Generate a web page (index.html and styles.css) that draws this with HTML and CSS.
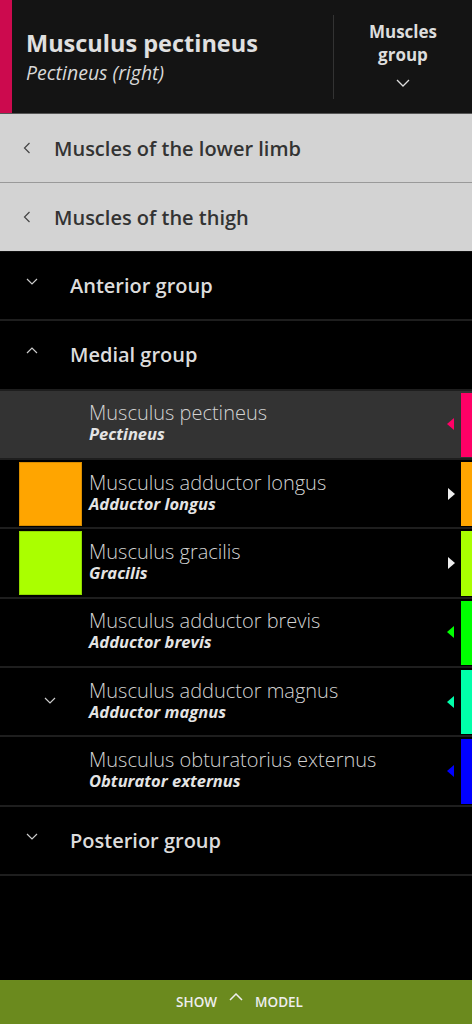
FILE: index.html
```html
<!DOCTYPE html>
<html lang="en">
<head>
<meta charset="utf-8">
<title>Musculus pectineus</title>
<link rel="stylesheet" href="styles.css">
</head>
<body>
<div class="app">
  <header class="header">
    <div class="accent"></div>
    <div class="title-block">
      <div class="title">Musculus pectineus</div>
      <div class="subtitle">Pectineus (right)</div>
    </div>
    <div class="group-btn">
      <div class="group-label">Muscles<br>group</div>
      <svg class="group-chev" width="14" height="8" viewBox="0 0 14 8"><path d="M1 1 L7 7 L13 1" fill="none" stroke="#ddd" stroke-width="1.3"/></svg>
    </div>
  </header>

  <div class="nav-row">
    <svg class="nav-chev" width="8" height="12" viewBox="0 0 8 12"><path d="M6.5 1 L1.5 6 L6.5 11" fill="none" stroke="#444" stroke-width="1.2"/></svg>
    <span class="nav-text">Muscles of the lower limb</span>
  </div>
  <div class="nav-row last">
    <svg class="nav-chev" width="8" height="12" viewBox="0 0 8 12"><path d="M6.5 1 L1.5 6 L6.5 11" fill="none" stroke="#444" stroke-width="1.2"/></svg>
    <span class="nav-text">Muscles of the thigh</span>
  </div>

  <div class="group-row">
    <svg class="grp-chev" width="12" height="7" viewBox="0 0 12 7"><path d="M1 1 L6 6 L11 1" fill="none" stroke="#ccc" stroke-width="1.2"/></svg>
    <span class="group-text">Anterior group</span>
  </div>
  <div class="group-row">
    <svg class="grp-chev" width="12" height="7" viewBox="0 0 12 7"><path d="M1 6 L6 1 L11 6" fill="none" stroke="#ccc" stroke-width="1.2"/></svg>
    <span class="group-text">Medial group</span>
  </div>

  <div class="item selected">
    <div class="lead"></div>
    <div class="item-text">
      <div class="item-name">Musculus pectineus</div>
      <div class="item-sub">Pectineus</div>
    </div>
    <svg class="tri" width="8" height="12" viewBox="0 0 8 12"><path d="M7 0 L0 6 L7 12 Z" fill="#ff0066"/></svg>
    <div class="bar" style="background:#ff0066"></div>
  </div>
  <div class="item">
    <div class="lead"><div class="swatch" style="background:#ffa500;border-color:#d98c00"></div></div>
    <div class="item-text">
      <div class="item-name">Musculus adductor longus</div>
      <div class="item-sub">Adductor longus</div>
    </div>
    <svg class="tri" width="8" height="12" viewBox="0 0 8 12"><path d="M1 0 L8 6 L1 12 Z" fill="#eee"/></svg>
    <div class="bar" style="background:#ffa500"></div>
  </div>
  <div class="item">
    <div class="lead"><div class="swatch" style="background:#aaff00;border-color:#90d800"></div></div>
    <div class="item-text">
      <div class="item-name">Musculus gracilis</div>
      <div class="item-sub">Gracilis</div>
    </div>
    <svg class="tri" width="8" height="12" viewBox="0 0 8 12"><path d="M1 0 L8 6 L1 12 Z" fill="#eee"/></svg>
    <div class="bar" style="background:#aaff00"></div>
  </div>
  <div class="item">
    <div class="lead"></div>
    <div class="item-text">
      <div class="item-name">Musculus adductor brevis</div>
      <div class="item-sub">Adductor brevis</div>
    </div>
    <svg class="tri" width="8" height="12" viewBox="0 0 8 12"><path d="M7 0 L0 6 L7 12 Z" fill="#00ff00"/></svg>
    <div class="bar" style="background:#00ff00"></div>
  </div>
  <div class="item">
    <div class="lead"><svg class="item-chev" width="12" height="7" viewBox="0 0 12 7"><path d="M1 1 L6 6 L11 1" fill="none" stroke="#ccc" stroke-width="1.2"/></svg></div>
    <div class="item-text">
      <div class="item-name">Musculus adductor magnus</div>
      <div class="item-sub">Adductor magnus</div>
    </div>
    <svg class="tri" width="8" height="12" viewBox="0 0 8 12"><path d="M7 0 L0 6 L7 12 Z" fill="#00ffaa"/></svg>
    <div class="bar" style="background:#00ffaa"></div>
  </div>
  <div class="item">
    <div class="lead"></div>
    <div class="item-text">
      <div class="item-name">Musculus obturatorius externus</div>
      <div class="item-sub">Obturator externus</div>
    </div>
    <svg class="tri" width="8" height="12" viewBox="0 0 8 12"><path d="M7 0 L0 6 L7 12 Z" fill="#0000ff"/></svg>
    <div class="bar" style="background:#0000ff"></div>
  </div>

  <div class="group-row">
    <svg class="grp-chev" width="12" height="7" viewBox="0 0 12 7"><path d="M1 1 L6 6 L11 1" fill="none" stroke="#ccc" stroke-width="1.2"/></svg>
    <span class="group-text">Posterior group</span>
  </div>

  <div class="spacer"></div>

  <footer class="footer">
    <span>SHOW</span>
    <svg class="foot-chev" width="14" height="8" viewBox="0 0 14 8"><path d="M1 7 L7 1 L13 7" fill="none" stroke="#eee" stroke-width="1.5"/></svg>
    <span>MODEL</span>
  </footer>
</div>
</body>
</html>
```

FILE: styles.css
```css
* { box-sizing: border-box; }
html, body { margin: 0; padding: 0; background: #000; }
body { font-family: "Open Sans", "Noto Sans", sans-serif; }
.app { width: 472px; height: 1024px; display: flex; flex-direction: column; background: #000; overflow: hidden; }

.header { height: 114px; flex: none; display: flex; background: #141414; border-bottom: 1px solid #555; }
.accent { width: 12px; background: #cc0a4e; flex: none; }
.title-block { flex: 1; padding: 28px 0 0 14px; }
.title { font-size: 23.5px; font-weight: 700; color: #e0e0e0; line-height: 31px; }
.subtitle { font-size: 19.5px; font-style: italic; color: #d8d8d8; line-height: 27px; }
.group-btn { width: 139px; flex: none; margin: 15px 0 14px; border-left: 1px solid #333; display: flex; flex-direction: column; align-items: center; padding-top: 5px; }
.group-label { font-size: 17px; font-weight: 700; color: #ddd; text-align: center; line-height: 23px; }
.group-chev { margin-top: 13px; }

.nav-row { height: 69px; flex: none; display: flex; align-items: center; background: #d3d3d3; border-bottom: 1px solid #999; }
.nav-row.last { border-bottom-color: #111; }
.nav-chev { margin-left: 23px; margin-right: 23px; }
.nav-text { font-size: 20px; font-weight: 600; color: #333; }

.group-row { height: 69.3px; flex: none; display: flex; align-items: center; border-bottom: 2px solid #1e1e1e; }
.grp-chev { margin-left: 26px; margin-right: 32px; position: relative; top: -4px; }
.group-text { font-size: 20px; font-weight: 600; color: #dcdcdc; }

.item { height: 69.33px; flex: none; display: flex; align-items: stretch; border-bottom: 2px solid #1e1e1e; }
.item.selected { background: #333; }
.lead { width: 89px; flex: none; display: flex; align-items: center; }
.swatch { width: 63px; height: 64px; margin-left: 19px; border: 1px solid; }
.item-chev { margin-left: 44px; position: relative; top: -1px; }
.item-text { flex: 1; display: flex; flex-direction: column; justify-content: center; padding-bottom: 2px; }
.item-name { font-size: 20px; font-weight: 300; color: #d2d2d2; line-height: 22px; }
.item-sub { font-size: 16.5px; font-weight: 700; font-style: italic; color: #e4e4e4; line-height: 20px; }
.tri { align-self: center; margin-right: 6px; }
.bar { width: 11px; flex: none; margin: 2px 0 1px; }

.spacer { flex: 1; }
.footer { height: 44px; flex: none; background: #6b8a1e; display: flex; align-items: center; justify-content: center; gap: 12px; padding-left: 7px; color: #eee; font-size: 13.5px; font-weight: 600; }
.foot-chev { position: relative; top: -5px; }
```
